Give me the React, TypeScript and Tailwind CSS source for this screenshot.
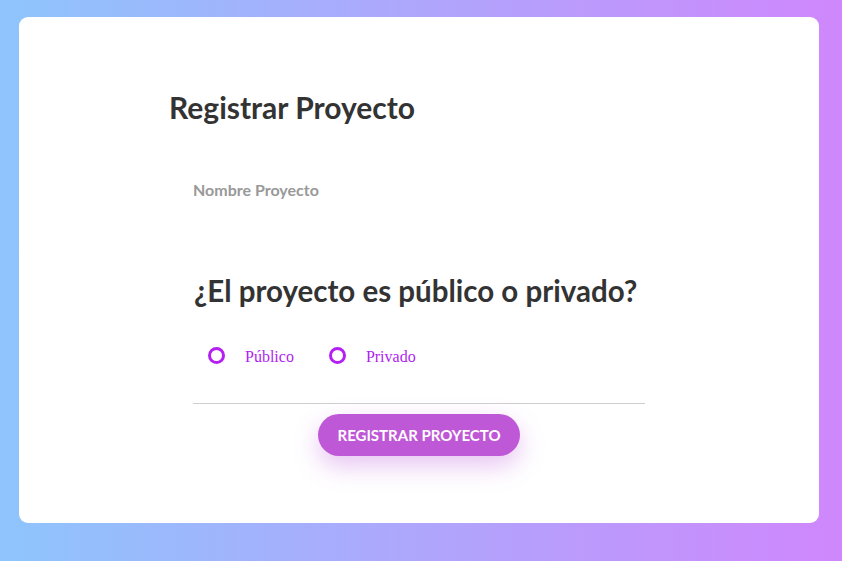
import React from "react";

export default function App() {
  return (
    <div className="w-[842px] h-[561px] bg-[linear-gradient(90deg,#8ec5fc_0%,#cf87fc_100%)] pt-[17px] pl-[19px]" style={{ fontFamily: "Lato, 'Open Sans', sans-serif" }}>
      <div className="w-[800px] h-[506px] bg-white rounded-[9px] flex justify-center">
        <div className="w-[500px] pt-[72px]">
          <h1 className="text-[30px] leading-[36px] font-bold text-[#333]">Registrar Proyecto</h1>
          <div className="px-6">
            <div className="mt-[55px] text-[16px] leading-[20px] font-bold text-[#999]">Nombre Proyecto</div>
            <h2 className="mt-[73px] ml-px text-[29.5px] leading-[36px] font-bold text-[#333]">¿El proyecto es público o privado?</h2>
            <div className="mt-[36px] h-5 ml-[15px] flex items-center" style={{ fontFamily: "'Liberation Serif', serif" }}>
              <span className="w-[17px] h-[17px] rounded-full border-[3px] border-[#b520f2]" />
              <span className="ml-5 text-[16px] leading-5 text-[#b01ef0] mt-1">Público</span>
              <span className="ml-[35px] w-[17px] h-[17px] rounded-full border-[3px] border-[#b520f2]" />
              <span className="ml-5 text-[16px] leading-5 text-[#b01ef0] mt-1">Privado</span>
            </div>
            <div className="mt-[38px] h-px bg-[#cfcfcf]" />
            <div className="mt-[10px] flex justify-center">
              <button className="w-[202px] h-[42px] rounded-full bg-[#bf58d6] text-white text-[15px] font-bold uppercase shadow-[0_10px_25px_rgba(190,90,220,0.35)]">
                Registrar Proyecto
              </button>
            </div>
          </div>
        </div>
      </div>
    </div>
  );
}
